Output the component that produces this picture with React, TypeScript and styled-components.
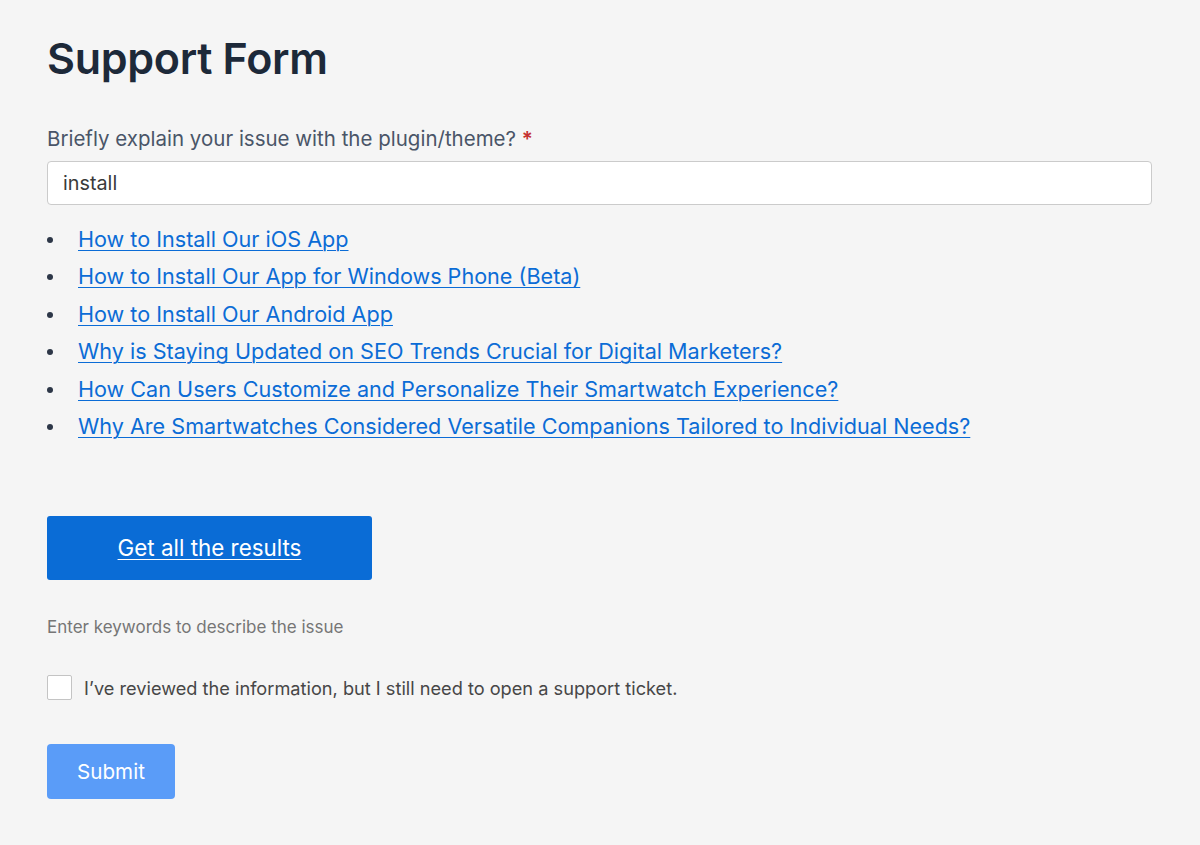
import React, { useState } from "react";
import styled, { createGlobalStyle } from "styled-components";

const GlobalStyle = createGlobalStyle`
  html, body {
    margin: 0;
    padding: 0;
    background: #f5f5f5;
  }
  body {
    font-family: Inter, "Noto Sans", "Liberation Sans", sans-serif;
    -webkit-font-smoothing: antialiased;
  }
`;

const Page = styled.div`
  min-height: 845px;
  box-sizing: border-box;
  padding: 32px 48px 40px 47px;
  background: #f5f5f5;
`;

const Title = styled.h1`
  margin: 0;
  font-size: 43px;
  line-height: 52.8px;
  font-weight: 600;
  color: #1d2939;
  letter-spacing: -0.3px;
`;

const Label = styled.label`
  display: block;
  margin-top: 40px;
  font-size: 20.5px;
  line-height: 27px;
  color: #4a5568;
`;

const Required = styled.span`
  color: #c53030;
  font-weight: 600;
`;

const SearchInput = styled.input`
  display: block;
  box-sizing: border-box;
  width: 100%;
  height: 44px;
  margin-top: 9px;
  padding: 0 15px;
  border: 1px solid #cbcbcb;
  border-radius: 4px;
  background: #fff;
  font-family: inherit;
  font-size: 19.8px;
  color: #3a3a3a;
  outline: none;
`;

const ResultList = styled.ul`
  list-style: none;
  margin: 16px 0 0;
  padding: 0;
`;

const ResultItem = styled.li`
  display: flex;
  align-items: center;
  font-size: 21.6px;
  line-height: 37.5px;
`;

const Dot = styled.span`
  flex: none;
  width: 6px;
  height: 6px;
  margin-right: 25px;
  border-radius: 50%;
  background: #2d3748;
`;

const ResultLink = styled.a`
  color: #0b6cd6;
  text-decoration: underline;
  text-underline-offset: 3px;
  text-decoration-thickness: 1px;
`;

const ResultsButton = styled.a`
  display: flex;
  align-items: center;
  justify-content: center;
  width: 325px;
  height: 64px;
  margin-top: 70px;
  border-radius: 3px;
  background: #0a6cd6;
  color: #fff;
  font-size: 22.4px;
  text-decoration: underline;
  text-underline-offset: 3px;
  text-decoration-thickness: 1px;
`;

const HelpText = styled.p`
  margin: 36px 0 0;
  font-size: 17px;
  line-height: 22.5px;
  color: #767676;
`;

const CheckRow = styled.label`
  display: flex;
  align-items: center;
  gap: 12px;
  margin-top: 37px;
  font-size: 18.2px;
  color: #474747;
  cursor: pointer;
`;

const Box = styled.span<{ $checked: boolean }>`
  flex: none;
  width: 25px;
  height: 25px;
  box-sizing: border-box;
  border: 1px solid #c4c4c4;
  border-radius: 2px;
  background: ${(p) => (p.$checked ? "#0a6cd6" : "#fff")};
`;

const SubmitButton = styled.button<{ $enabled: boolean }>`
  display: block;
  width: 128px;
  height: 55px;
  margin-top: 44px;
  border: none;
  border-radius: 4px;
  background: ${(p) => (p.$enabled ? "#0a6cd6" : "#5a9cf8")};
  color: #fff;
  font-family: inherit;
  font-size: 20.6px;
`;

const results = [
  "How to Install Our iOS App",
  "How to Install Our App for Windows Phone (Beta)",
  "How to Install Our Android App",
  "Why is Staying Updated on SEO Trends Crucial for Digital Marketers?",
  "How Can Users Customize and Personalize Their Smartwatch Experience?",
  "Why Are Smartwatches Considered Versatile Companions Tailored to Individual Needs?",
];

export default function App() {
  const [query, setQuery] = useState("install");
  const [confirmed, setConfirmed] = useState(false);

  return (
    <Page>
      <GlobalStyle />
      <Title>Support Form</Title>

      <Label htmlFor="issue">
        Briefly explain your issue with the plugin/theme? <Required>*</Required>
      </Label>
      <SearchInput
        id="issue"
        value={query}
        onChange={(e) => setQuery(e.target.value)}
      />

      <ResultList>
        {results.map((title) => (
          <ResultItem key={title}>
            <Dot />
            <ResultLink href="#">{title}</ResultLink>
          </ResultItem>
        ))}
      </ResultList>

      <ResultsButton href="#">Get all the results</ResultsButton>

      <HelpText>Enter keywords to describe the issue</HelpText>

      <CheckRow onClick={() => setConfirmed((c) => !c)}>
        <Box $checked={confirmed} />
        I’ve reviewed the information, but I still need to open a support ticket.
      </CheckRow>

      <SubmitButton $enabled={confirmed} disabled={!confirmed}>
        Submit
      </SubmitButton>
    </Page>
  );
}
